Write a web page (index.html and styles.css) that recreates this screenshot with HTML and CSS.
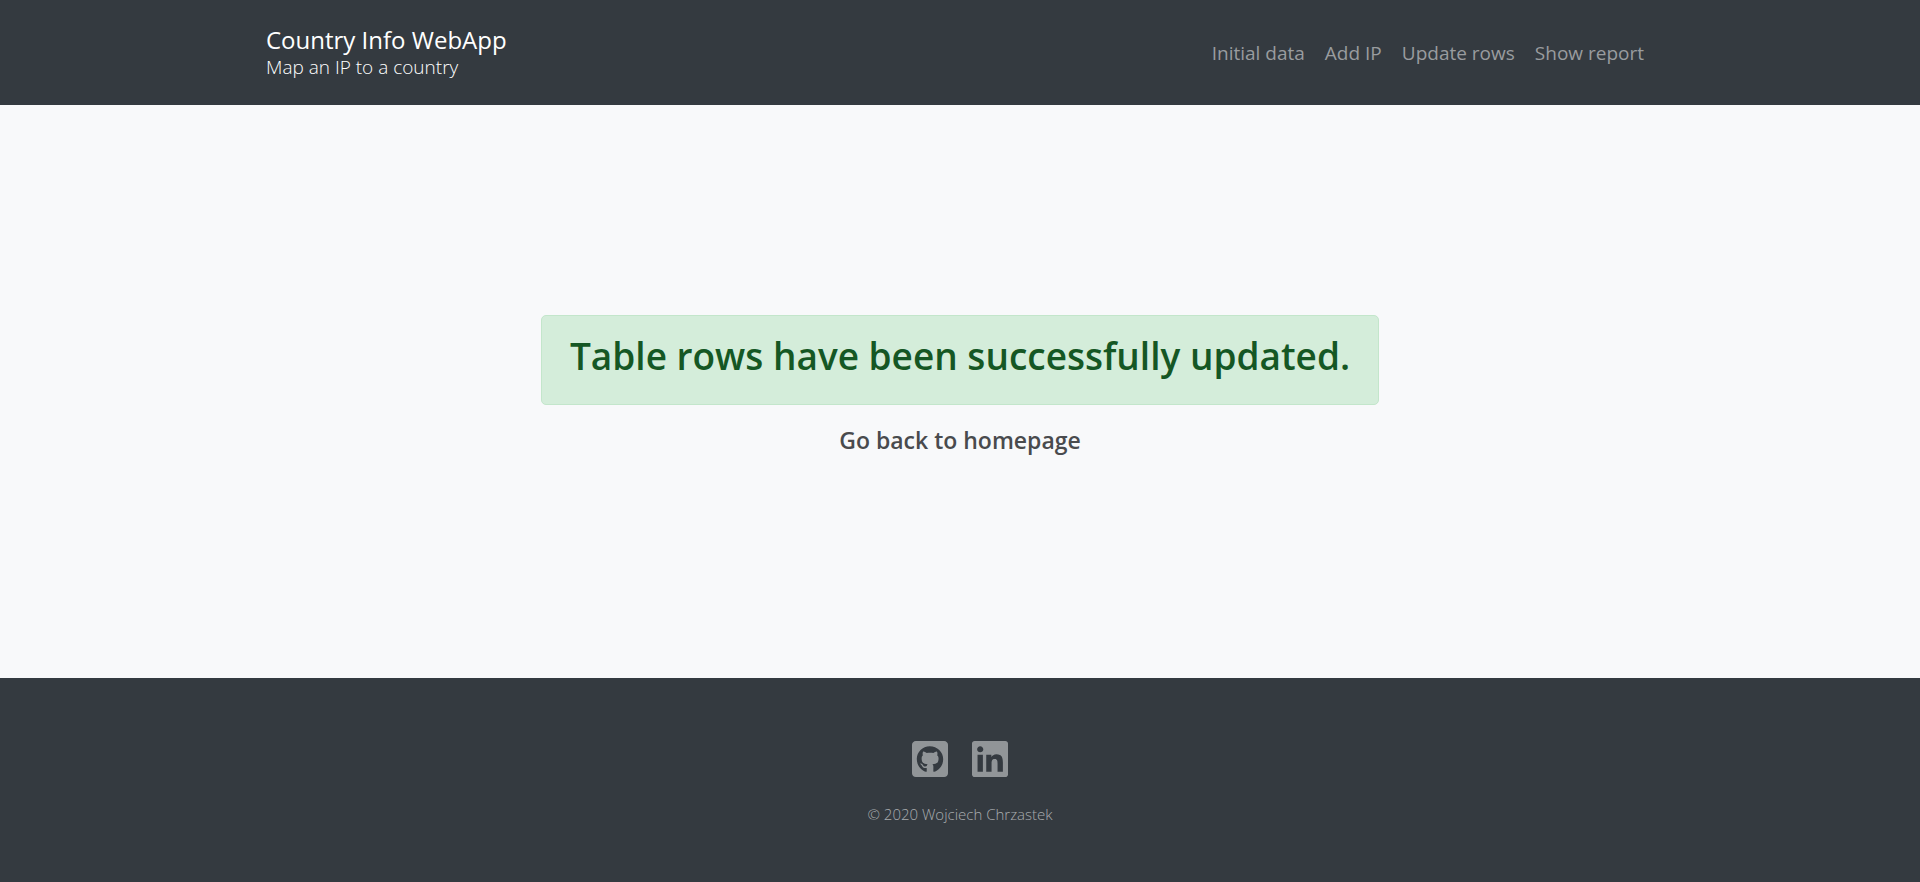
FILE: index.html
```html
<!DOCTYPE html>
<html lang="en">
<head>
<meta charset="utf-8">
<meta name="viewport" content="width=device-width, initial-scale=1">
<title>Country Info WebApp</title>
<link rel="stylesheet" href="styles.css">
</head>
<body>
<header class="site-header">
  <div class="container">
    <a class="brand" href="#">
      <span class="brand-name">Country Info WebApp</span>
      <span class="brand-tagline">Map an IP to a country</span>
    </a>
    <nav class="site-nav">
      <a href="#">Initial data</a>
      <a href="#">Add IP</a>
      <a href="#">Update rows</a>
      <a href="#">Show report</a>
    </nav>
  </div>
</header>
<main class="content">
  <div class="alert" role="alert"><h1>Table rows have been successfully updated.</h1></div>
  <a class="home-link" href="#">Go back to homepage</a>
</main>
<footer class="site-footer">
  <div class="social">
    <a href="#" aria-label="GitHub"><svg viewBox="0 32 448 448" aria-hidden="true"><path d="M400 32H48C21.5 32 0 53.5 0 80v352c0 26.5 21.5 48 48 48h352c26.5 0 48-21.5 48-48V80c0-26.5-21.5-48-48-48zM277.3 415.7c-8.4 1.5-11.5-3.7-11.5-8 0-5.4.2-33 .2-55.3 0-15.6-5.2-25.5-11.3-30.7 37-4.1 76-9.2 76-73.1 0-18.2-6.5-27.3-17.1-39 1.7-4.3 7.4-22-1.7-45-13.9-4.3-45.7 17.9-45.7 17.9-13.2-3.7-27.5-5.6-41.6-5.6-14.1 0-28.4 1.9-41.6 5.6 0 0-31.8-22.2-45.7-17.9-9.1 22.9-3.5 40.6-1.7 45-10.6 11.7-15.6 20.8-15.6 39 0 63.6 37.3 69 74.3 73.1-4.8 4.3-9.1 11.7-10.6 22.3-9.5 4.3-33.8 11.7-48.3-13.9-9.1-15.8-25.5-17.1-25.5-17.1-16.2-.2-1.1 10.2-1.1 10.2 10.8 5 18.4 24.2 18.4 24.2 9.7 29.7 56.1 19.7 56.1 19.7 0 13.9.2 36.5.2 40.6 0 4.3-3 9.5-11.5 8-66-22.1-112.2-84.9-112.2-158.3 0-91.8 70.2-161.5 162-161.5S388 165.6 388 257.4c.1 73.4-44.7 136.3-110.7 158.3z"/></svg></a>
    <a href="#" aria-label="LinkedIn"><svg viewBox="0 32 448 448" aria-hidden="true"><path d="M416 32H31.900C14.300 32 0 46.500 0 64.300v383.400C0 465.500 14.300 480 31.900 480H416c17.600 0 32-14.500 32-32.300V64.300c0-17.800-14.400-32.300-32-32.300zM135.400 416H69V202.200h66.500V416zm-33.200-243c-21.300 0-38.500-17.300-38.500-38.500S80.900 96 102.200 96c21.200 0 38.500 17.300 38.500 38.500 0 21.300-17.200 38.500-38.500 38.500zm282.100 243h-66.400V312c0-24.800-.5-56.700-34.500-56.700-34.600 0-39.900 27-39.900 54.900V416h-66.400V202.200h63.700v29.200h.9c8.900-16.800 30.600-34.500 62.900-34.500 67.200 0 79.700 44.300 79.700 101.900V416z"/></svg></a>
  </div>
  <p class="copyright">© 2020 Wojciech Chrzastek</p>
</footer>
</body>
</html>
```

FILE: styles.css
```css
* {
  box-sizing: border-box;
}

body {
  display: flex;
  flex-direction: column;
  min-height: 100vh;
  margin: 0;
  background: #f8f9fa;
  font-family: "Segoe UI", "Open Sans", "Noto Sans", sans-serif;
  font-size: 20px;
  line-height: 30px;
}

a {
  color: inherit;
  text-decoration: none;
}

.site-header {
  padding: 24px 0;
  background: #343a40;
}

.container {
  display: flex;
  align-items: center;
  justify-content: space-between;
  max-width: 1428px;
  margin: 0 auto;
  padding: 0 20px;
}

.brand {
  display: flex;
  flex-direction: column;
  padding: 1px 0 2px;
  color: #fff;
}

.brand-name {
  font-size: 24px;
  line-height: 30px;
}

.brand-tagline {
  font-size: 19px;
  font-weight: 300;
  line-height: 24px;
}

.site-nav {
  display: flex;
  gap: 20px;
  padding-right: 10px;
  color: #999c9f;
  font-size: 19px;
}

.content {
  display: flex;
  flex: 1;
  flex-direction: column;
  align-items: center;
  justify-content: center;
  gap: 20px;
  padding: 20px 20px 34px;
}

.alert {
  padding: 16px 28px 24px;
  border: 1px solid #c3e6cb;
  border-radius: 5px;
  background: #d4edda;
  color: #155724;
}

.alert h1 {
  margin: 0;
  font-size: 37px;
  font-weight: 600;
  line-height: 48px;
}

.home-link {
  color: #494b4d;
  font-size: 23px;
  font-weight: 600;
}

.site-footer {
  display: flex;
  flex-direction: column;
  align-items: center;
  gap: 25px;
  padding: 63px 20px 56px;
  background: #343a40;
  color: #999c9f;
}

.social {
  display: flex;
  gap: 24px;
}

.social svg {
  display: block;
  width: 36px;
  height: 36px;
  fill: #919598;
}

.copyright {
  margin: 0;
  color: #a9acaf;
  font-size: 15px;
  font-weight: 300;
  line-height: 24px;
}
```
